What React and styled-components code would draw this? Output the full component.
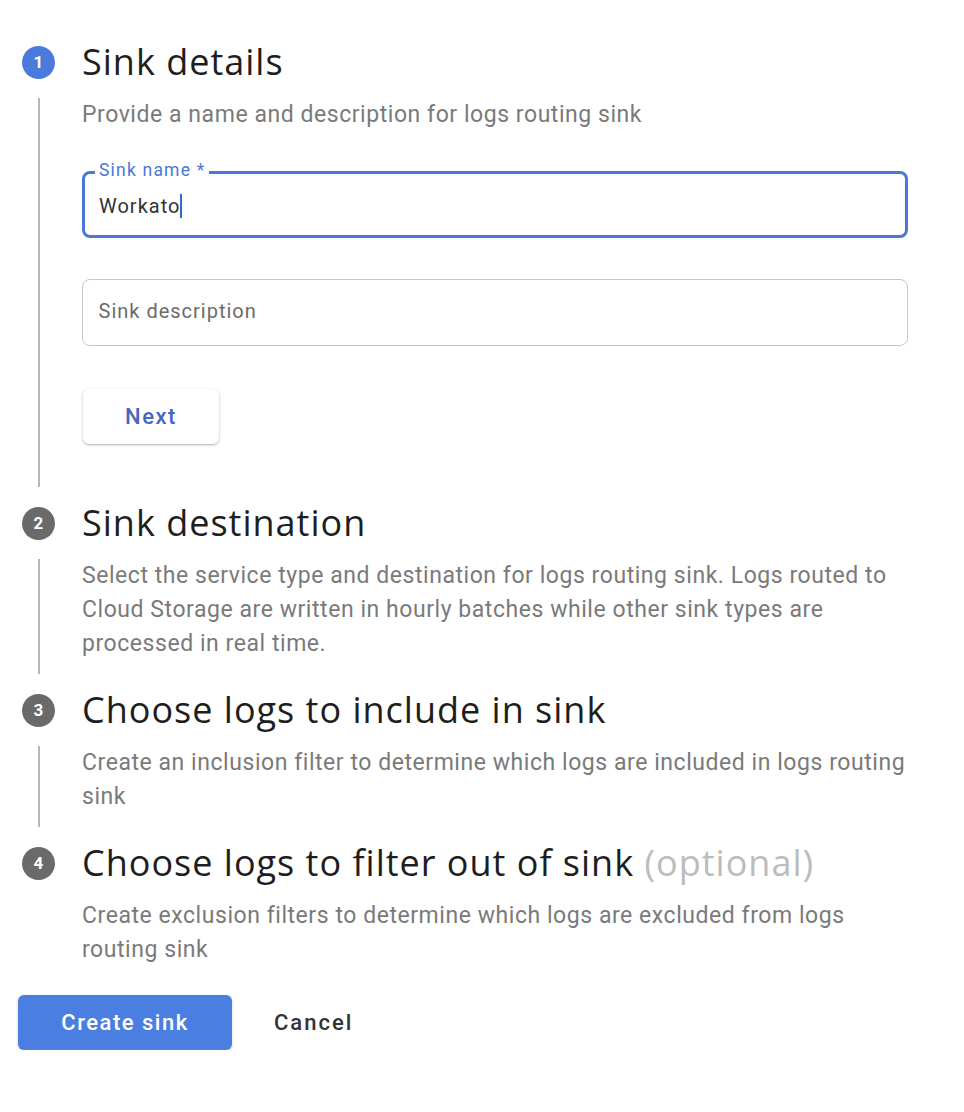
import React from "react";
import styled, { createGlobalStyle } from "styled-components";

const GlobalStyle = createGlobalStyle`
  body {
    margin: 0;
    background: #ffffff;
    font-family: Roboto, "Liberation Sans", sans-serif;
  }
`;

const steps = [
  {
    n: 1,
    title: "Sink details",
    desc: "Provide a name and description for logs routing sink",
    active: true,
  },
  {
    n: 2,
    title: "Sink destination",
    desc: "Select the service type and destination for logs routing sink. Logs routed to Cloud Storage are written in hourly batches while other sink types are processed in real time.",
  },
  {
    n: 3,
    title: "Choose logs to include in sink",
    desc: "Create an inclusion filter to determine which logs are included in logs routing sink",
  },
  {
    n: 4,
    title: "Choose logs to filter out of sink",
    optional: true,
    desc: "Create exclusion filters to determine which logs are excluded from logs routing sink",
    last: true,
  },
];

const App = () => {
  return (
    <>
      <GlobalStyle />
      <Page>
        <Stepper>
          {steps.map((s) => (
            <Step key={s.n}>
              <Badge $active={s.active}>{s.n}</Badge>
              <Title>
                {s.title}
                {s.optional && <Optional> (optional)</Optional>}
              </Title>
              <Rail>{!s.last && <Line />}</Rail>
              <Body $last={s.last}>
                <Desc>{s.desc}</Desc>
                {s.active && (
                  <Form>
                    <Field $focused>
                      <FloatLabel>Sink name *</FloatLabel>
                      <Value>
                        Workato<Caret />
                      </Value>
                    </Field>
                    <Field>
                      <Placeholder>Sink description</Placeholder>
                    </Field>
                    <NextButton>Next</NextButton>
                  </Form>
                )}
              </Body>
            </Step>
          ))}
        </Stepper>
        <Actions>
          <PrimaryButton>Create sink</PrimaryButton>
          <TextButton>Cancel</TextButton>
        </Actions>
      </Page>
    </>
  );
};

const Page = styled.div`
  padding: 40px 56px 0 18px;
  width: 964px;
  box-sizing: border-box;
`;

const Stepper = styled.div`
  display: flex;
  flex-direction: column;
  gap: 14px;
  padding-left: 4px;
`;

const Step = styled.div`
  display: grid;
  grid-template-columns: 33px 1fr;
  column-gap: 27px;
  grid-template-rows: 44px auto;
  row-gap: 14px;
`;

const Badge = styled.div`
  align-self: center;
  width: 33px;
  height: 33px;
  border-radius: 50%;
  background: ${({ $active }) => ($active ? "#4a7bdc" : "#6a6a6a")};
  color: #fff;
  font-family: Roboto, sans-serif;
  font-weight: 700;
  font-size: 17px;
  display: flex;
  align-items: center;
  justify-content: center;
`;

const Title = styled.div`
  align-self: center;
  font-family: "Open Sans", sans-serif;
  font-size: 36px;
  line-height: 44px;
  color: #1e1e1e;
  letter-spacing: 1px;
  white-space: nowrap;
`;

const Optional = styled.span`
  color: #bcbcbc;
`;

const Rail = styled.div`
  display: flex;
  justify-content: center;
`;

const Line = styled.div`
  width: 2px;
  background: #b8b8b8;
`;

const Body = styled.div`
  padding-bottom: ${({ $last }) => ($last ? "14px" : "13px")};
`;

const Desc = styled.div`
  font-size: 23px;
  line-height: 34px;
  letter-spacing: 0.55px;
  color: #7a7a7a;
  max-width: 826px;
`;

const Form = styled.div`
  display: flex;
  flex-direction: column;
  align-items: flex-start;
  gap: 41px;
  padding: 39px 0 30px;
`;

const Field = styled.div`
  position: relative;
  width: 826px;
  height: 67px;
  box-sizing: border-box;
  border: ${({ $focused }) => ($focused ? "3px solid #4a77d8" : "1.5px solid #c6c6c6")};
  border-radius: 8px;
  display: flex;
  align-items: center;
  padding: 0 ${({ $focused }) => ($focused ? "14px" : "15.5px")} 4px;
`;

const FloatLabel = styled.span`
  position: absolute;
  left: 10px;
  top: -14px;
  padding: 0 4px;
  background: #fff;
  color: #4a77d8;
  font-size: 17.5px;
  letter-spacing: 1.2px;
  line-height: 20px;
`;

const Value = styled.span`
  font-size: 20px;
  letter-spacing: 1px;
  color: #333;
  display: flex;
  align-items: center;
  padding-top: 6px;
`;

const Caret = styled.span`
  display: inline-block;
  width: 1.5px;
  height: 24px;
  background: #3b66c9;
`;

const Placeholder = styled.span`
  font-size: 20px;
  letter-spacing: 1px;
  color: #6b6b6b;
`;

const NextButton = styled.button`
  width: 136px;
  height: 55px;
  margin-top: 2px;
  border: none;
  border-radius: 6px;
  background: #fff;
  box-shadow: 0 1px 3px rgba(0, 0, 0, 0.25), 0 1px 1px rgba(0, 0, 0, 0.08);
  color: #4766c4;
  font-family: Roboto, sans-serif;
  font-weight: 500;
  font-size: 22px;
  letter-spacing: 1.5px;
  margin-left: 1px;
`;

const Actions = styled.div`
  display: flex;
  align-items: center;
  gap: 12px;
  padding-top: 14px;
`;

const PrimaryButton = styled.button`
  width: 214px;
  height: 55px;
  border: none;
  border-radius: 6px;
  background: #4a7ee0;
  box-shadow: 0 1px 3px rgba(0, 0, 0, 0.2);
  color: #fff;
  font-family: Roboto, sans-serif;
  font-size: 22px;
  letter-spacing: 1.5px;
  font-weight: 500;
`;

const TextButton = styled.button`
  border: none;
  background: none;
  height: 55px;
  padding: 0 30px;
  color: #333;
  font-family: Roboto, sans-serif;
  font-size: 22px;
  letter-spacing: 2px;
  font-weight: 500;
`;

export default App;
